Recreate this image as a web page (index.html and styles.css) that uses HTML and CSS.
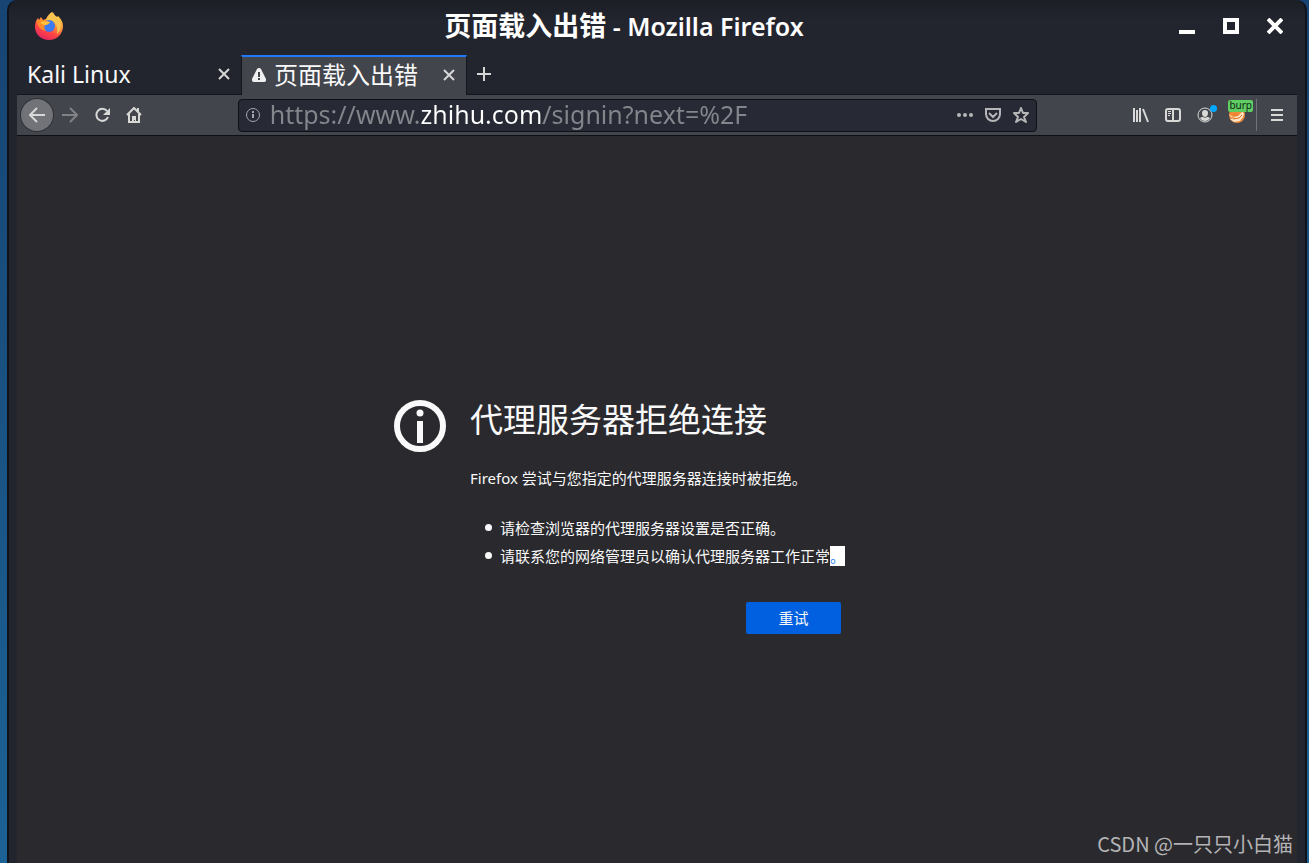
FILE: index.html
```html
<!DOCTYPE html>
<html lang="zh-CN">
<head>
    <meta charset="UTF-8">
    <title>页面载入出错 - Mozilla Firefox</title>
    <link rel="stylesheet" href="styles.css">
</head>
<body>

<div class="window">

    <header class="titlebar">
        <svg class="logo" viewBox="0 0 28 28" aria-hidden="true">
            <defs>
                <linearGradient id="fox" x1="0.8" y1="0" x2="0.3" y2="1">
                    <stop offset="0" stop-color="#ffe14a"/>
                    <stop offset="0.4" stop-color="#ff9a3c"/>
                    <stop offset="0.7" stop-color="#ff4544"/>
                    <stop offset="1" stop-color="#e22563"/>
                </linearGradient>
            </defs>
            <path fill="url(#fox)" d="M14 28C6 28 0 22 0 15c0-4 1-7 3-9l1 2 2-3 2 3 3-1c2-4 4-6 6-7 1 3 3 4 5 5l1-1c3 3 5 6 5 10 0 8-6 14-14 14z"/>
            <path fill="#f7c452" d="M18 0c1 3 3 4 5 6 4 4 4 12-1 16 1-6 0-11-5-13-2-1-4-1-6-1 2-4 5-6 7-8z"/>
            <circle cx="14" cy="14" r="6" fill="#3c7cf0"/>
            <path fill="#6b4bd0" d="M10 18a6 6 0 0 0 9-1c-2 2-6 3-9 1z"/>
            <path fill="#ff8a2b" d="M2 8l6 0c2 1 4 1 7 2-1 2-3 3-5 3-1 2-1 4 1 6-6-1-9-5-9-11z"/>
            <path fill="#ffc23d" d="M5 10c3-1 7-1 10 0-1 2-3 3-5 3-2 0-4-1-5-3z"/>
        </svg>
        <h1 class="window-title">页面载入出错<span> - Mozilla Firefox</span></h1>
        <div class="window-buttons">
            <button aria-label="最小化"><svg viewBox="0 0 16 16"><path fill="#fff" d="M0 12h16v4H0z"/></svg></button>
            <button aria-label="最大化"><svg viewBox="0 0 16 16"><path fill="none" stroke="#fff" stroke-width="4" d="M2 2h12v12H2z"/></svg></button>
            <button aria-label="关闭"><svg viewBox="0 0 16 16"><path stroke="#fff" stroke-width="4" d="M1 1l14 14M15 1L1 15"/></svg></button>
        </div>
    </header>

    <nav class="tabs">
        <div class="tab">
            <a href="#" class="tab-label latin">Kali Linux</a>
            <button class="tab-close" aria-label="关闭标签页"><svg viewBox="0 0 12 12"><path d="M1 1l10 10M11 1L1 11"/></svg></button>
        </div>
        <div class="tab active">
            <svg class="warning" viewBox="0 0 14 14" aria-hidden="true">
                <path fill="#f0f0f0" d="M7 0c1 0 1 0 2 1l5 10c0 2 0 3-2 3H2c-2 0-2-1-2-3L5 1c1-1 1-1 2-1z"/>
                <path fill="#42454c" d="M6 4h2v5H6zM6 10h2v2H6z"/>
            </svg>
            <a href="#" class="tab-label">页面载入出错</a>
            <button class="tab-close" aria-label="关闭标签页"><svg viewBox="0 0 12 12"><path d="M1 1l10 10M11 1L1 11"/></svg></button>
        </div>
        <button class="new-tab" aria-label="新建标签页"><svg viewBox="0 0 14 14"><path d="M7 0v14M0 7h14"/></svg></button>
    </nav>

    <div class="toolbar">
        <button class="tool back" aria-label="后退"><svg viewBox="0 0 16 16"><path d="M16 8H1M8 1L1 8l7 7"/></svg></button>
        <button class="tool forward" aria-label="前进" disabled><svg viewBox="0 0 16 16"><path d="M0 8h15M8 1l7 7-7 7"/></svg></button>
        <button class="tool" aria-label="刷新"><svg viewBox="0 0 16 16"><path d="M13 4a6 6 0 1 0 1 6"/><path class="solid" d="M16 1v7H9z"/></svg></button>
        <button class="tool" aria-label="主页"><svg viewBox="0 0 16 16"><path d="M1 8l7-7 7 7M3 7v8h10V7"/><path class="solid" d="M11 1h2v4h-2zM6 9h4v6H9v-2H8v2H6z"/></svg></button>
        <div class="spacer"></div>
        <form class="urlbar">
            <svg class="info" viewBox="0 0 14 14" aria-hidden="true"><circle cx="7" cy="7" r="6.5"/><path stroke-width="2" d="M7 6v4M7 3v2"/></svg>
            <input class="url" type="text" aria-label="网址" value="https://www.zhihu.com/signin?next=%2F" spellcheck="false">
            <button type="button" aria-label="页面操作"><svg viewBox="0 0 16 16"><g class="solid"><circle cx="2" cy="8" r="2"/><circle cx="8" cy="8" r="2"/><circle cx="14" cy="8" r="2"/></g></svg></button>
            <button type="button" aria-label="Pocket"><svg viewBox="0 0 16 16"><path d="M1 2h14v5a7 7 0 0 1-14 0zM4 6l4 4 4-4"/></svg></button>
            <button type="button" aria-label="书签"><svg viewBox="0 0 16 16"><path stroke-linejoin="round" d="M8 1l2 5 5 0-4 4 2 5-5-3-5 3 2-5-4-4 5 0z"/></svg></button>
        </form>
        <div class="spacer"></div>
        <button class="tool" aria-label="我的足迹"><svg viewBox="0 0 16 16"><path d="M1 1v14M4 3v12M7 1v14M10 2l5 13"/></svg></button>
        <button class="tool" aria-label="侧栏"><svg viewBox="0 0 16 16"><rect x="1" y="2" width="14" height="12" rx="2"/><path d="M8 2v12"/><path stroke-width="1" d="M3 4.500h3M3 6.500h3M3 8.500h2"/></svg></button>
        <button class="tool account" aria-label="账户">
            <svg viewBox="0 0 16 16"><circle cx="8" cy="8" r="7" stroke-width="1"/><path class="solid" d="M8 3a3 3 0 0 1 3 3c0 2-1 4-3 4S5 8 5 6a3 3 0 0 1 3-3zM3 11c1-1 2-1 3-1 1 1 3 1 4 0 1 0 2 0 3 1-1 2-3 3-5 3s-4-1-5-3z"/></svg>
            <span class="dot"></span>
        </button>
        <button class="tool burp" aria-label="burp">
            <svg viewBox="0 0 16 16">
                <circle class="fox-face" cx="8" cy="8" r="8"/>
                <path class="fox-eyes" d="M0 7l4 3 5-1 4-4 2 1-1 4-3 4-6 1-4-3 6-1-5-1z"/>
                <path class="fox-mouth" d="M4 12l6-1 3-3M5 8h3"/>
            </svg>
            <span class="badge">burp</span>
        </button>
        <button class="tool menu" aria-label="打开菜单"><svg viewBox="0 0 16 16"><path d="M2 3h12M2 8h12M2 13h12"/></svg></button>
    </div>

    <main class="page">
        <section class="error">
            <svg class="error-icon" viewBox="0 0 52 52" aria-hidden="true">
                <circle cx="26" cy="26" r="23" fill="none" stroke="#f9f9fa" stroke-width="6"/>
                <circle cx="26" cy="13" r="3.500" fill="#f9f9fa"/>
                <path fill="#f9f9fa" d="M23 21h6v22h-6z"/>
            </svg>
            <div class="error-text">
                <h2>代理服务器拒绝连接</h2>
                <p>Firefox 尝试与您指定的代理服务器连接时被拒绝。</p>
                <ul>
                    <li>请检查浏览器的代理服务器设置是否正确。</li>
                    <li>请联系您的网络管理员以确认代理服务器工作正常<mark>。</mark></li>
                </ul>
                <button class="retry">重试</button>
            </div>
        </section>
    </main>

</div>

<div class="watermark">CSDN @一只只小白猫</div>

</body>
</html>
```
FILE: styles.css
```css
* {
  box-sizing: border-box;
}

body {
  margin: 0;
  min-height: 100vh;
  display: flex;
  padding: 0 2px 0 7px;
  background: linear-gradient(#174472, #1c6295);
  font-family: "Noto Sans", "Noto Sans CJK SC", sans-serif;
  color: #f9f9fa;
  overflow: hidden;
}

button {
  border: none;
  padding: 0;
  background: none;
  color: inherit;
  font-family: inherit;
  display: flex;
  align-items: center;
  justify-content: center;
}

svg {
  display: block;
  flex: none;
}

a {
  color: inherit;
  text-decoration: none;
}

.window {
  flex: 1;
  display: flex;
  flex-direction: column;
  padding: 0 8px;
  border: 2px solid #11131b;
  border-top: none;
  border-bottom: none;
  border-radius: 10px 10px 0 0;
  background: linear-gradient(#1c1e26, #23252e 20px);
}

/* title bar */
.titlebar {
  display: flex;
  align-items: center;
  height: 55px;
  padding: 0 14px 4px 18px;
}

.logo {
  width: 28px;
  height: 28px;
}

.window-title {
  flex: 1;
  margin: 0;
  padding-left: 6px;
  text-align: center;
  font-size: 27px;
  line-height: 36px;
  font-weight: 600;
  color: #fff;
}

.window-title span {
  font-size: 25px;
}

.window-buttons {
  display: flex;
  justify-content: flex-end;
  gap: 28px;
}

.window-buttons svg {
  width: 16px;
  height: 16px;
}

/* tabs */
.tabs {
  display: flex;
  height: 40px;
  border-bottom: 1px solid #14161d;
}

.tab {
  display: flex;
  align-items: center;
  width: 224px;
  padding: 0 11px 2px 10px;
}

.tab.active {
  width: 226px;
  height: 40px;
  border: 1px solid #14161d;
  border-top: 2px solid #2178f8;
  border-bottom: none;
  background: #42454c;
}

.tab-label {
  flex: 1;
  font-size: 24px;
  line-height: 36px;
  white-space: nowrap;
}

.tab-label.latin {
  font-size: 23px;
}

.warning {
  width: 14px;
  height: 14px;
  margin-right: 8px;
}

.tab-close svg {
  width: 12px;
  height: 12px;
}

.new-tab {
  width: 34px;
  padding-bottom: 2px;
}

.new-tab svg {
  width: 14px;
  height: 14px;
}

.tab-close path,
.new-tab path {
  stroke: #d6d6d6;
  stroke-width: 2;
}

/* toolbar */
.toolbar {
  display: flex;
  align-items: center;
  height: 41px;
  padding-left: 4px;
  background: #42454c;
  border-bottom: 1px solid #0f1016;
}

.tool {
  position: relative;
  width: 32px;
  height: 32px;
}

.toolbar svg {
  width: 16px;
  height: 16px;
  fill: none;
  stroke: #d8d8d6;
  stroke-width: 2;
}

.toolbar .solid {
  fill: #d8d8d6;
  stroke: none;
}

.back {
  margin-right: 1px;
  border-radius: 50%;
  background: #727378;
  box-shadow: 0 0 0 1px #303238;
}

.toolbar .forward svg {
  stroke: #808286;
}

.spacer {
  flex: 1;
}

.urlbar {
  flex: 9;
  display: flex;
  align-items: center;
  height: 33px;
  padding: 0 1px 0 7px;
  border: 1px solid #0e1017;
  border-radius: 4px;
  background: #272935;
}

.urlbar .info {
  width: 14px;
  height: 14px;
  stroke: #a5a6ab;
  stroke-width: 1;
}

.urlbar button {
  width: 28px;
  height: 28px;
}

.urlbar button svg {
  stroke: #b6b6b8;
}

.urlbar .solid {
  fill: #b6b6b8;
}

/* the domain is brighter than the rest of the address */
.url {
  flex: 1;
  min-width: 0;
  height: 31px;
  margin-left: 10px;
  padding: 0 0 2px;
  border: none;
  outline: none;
  font-family: inherit;
  font-size: 25px;
  color: #85868c;
  background: linear-gradient(to right, #85868c 151px, #fff 151px, #fff 273px, #85868c 273px);
  -webkit-background-clip: text;
  background-clip: text;
  -webkit-text-fill-color: transparent;
}

.dot {
  position: absolute;
  top: 6px;
  right: 4px;
  width: 7px;
  height: 7px;
  border-radius: 50%;
  background: #00a8ff;
}

.burp .fox-face {
  fill: #f08a38;
  stroke: none;
}

.burp .fox-eyes {
  fill: #ffe3c4;
  stroke: none;
}

.burp .fox-mouth {
  stroke: #e0701f;
  stroke-width: 1;
}

.badge {
  position: absolute;
  top: 1px;
  right: 0;
  height: 12px;
  padding: 0 1px;
  border-radius: 2px;
  background: #5fce62;
  color: #14251a;
  font-size: 10px;
  line-height: 10px;
}

.menu {
  width: 41px;
  margin-left: 3px;
  border-left: 1px solid #707277;
}

/* error page */
.page {
  flex: 1;
  display: flex;
  align-items: center;
  justify-content: center;
  padding-top: 34px;
  background: #2a2a2e;
}

.error {
  display: flex;
  align-items: flex-start;
  gap: 24px;
  padding-right: 75px;
}

.error-icon {
  width: 52px;
  height: 52px;
}

.error-text {
  font-size: 15px;
  line-height: 28px;
}

.error-text h2 {
  margin: 0 0 24px;
  font-size: 33px;
  line-height: 40px;
  font-weight: 400;
}

.error-text p {
  margin: 0 0 22px;
}

.error-text ul {
  margin: 0 0 32px;
  padding-left: 15px;
  list-style: none;
}

.error-text li {
  display: flex;
  align-items: center;
}

.error-text li::before {
  content: "";
  width: 7px;
  height: 7px;
  margin-right: 8px;
  border-radius: 50%;
  background: #f9f9fa;
}

.error-text mark {
  line-height: 20px;
  background: #fff;
  color: #2178f8;
}

.retry {
  width: 95px;
  height: 32px;
  margin: 0 4px 0 auto;
  border-radius: 2px;
  background: #0060df;
  font-size: 15px;
}

.watermark {
  position: absolute;
  right: 16px;
  bottom: 4px;
  font-family: "Noto Sans CJK SC", sans-serif;
  font-size: 20px;
  line-height: 30px;
  color: #b4b4b6;
}
```
